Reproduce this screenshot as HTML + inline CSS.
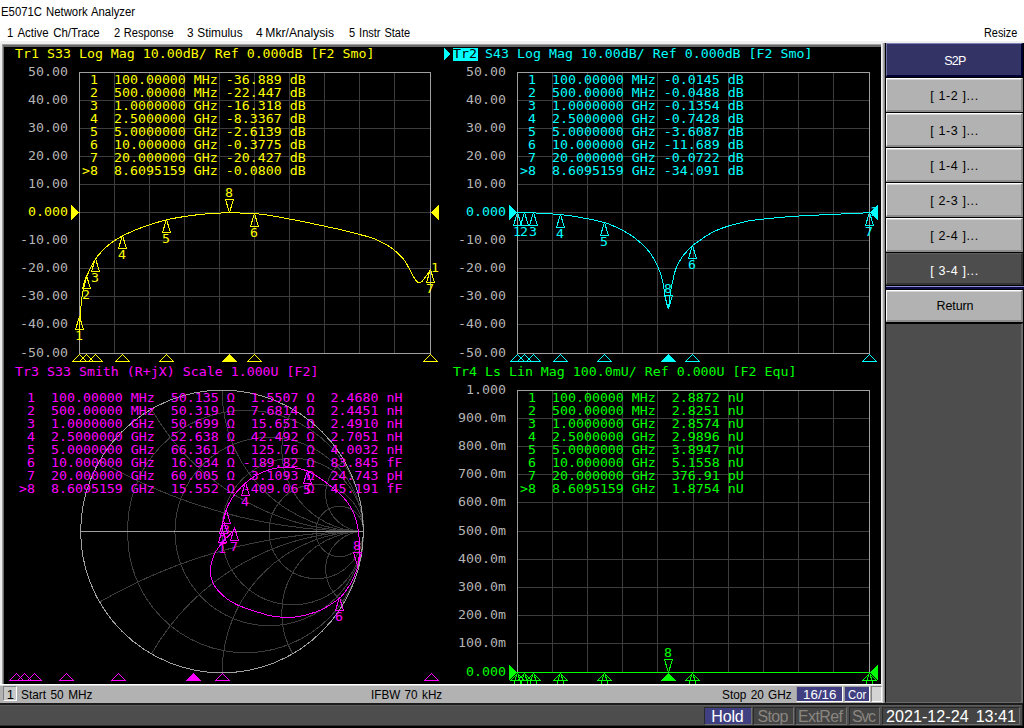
<!DOCTYPE html>
<html><head><meta charset="utf-8"><title>E5071C Network Analyzer</title>
<style>
html,body{margin:0;padding:0}
body{width:1024px;height:728px;overflow:hidden;background:#fff;position:relative;font-family:"Liberation Sans",sans-serif;color:#000}
.t{position:absolute;white-space:pre;line-height:1}
.abs{position:absolute}
.sk{position:absolute;left:886px;width:137px;height:34px;background:#b2b2b2;box-sizing:border-box;border-style:solid;border-width:1px 2px 2px 1px;border-color:#fff #8c8c8c #8c8c8c #fff;box-shadow:inset 0 1px 0 #d4d4d4}
svg text{font-family:"DejaVu Sans Mono","Liberation Mono",monospace;font-size:11.7px;white-space:pre}
</style></head><body>

<div class="t" style="left:1.3px;top:5.84px;font-size:12px;word-spacing:0.886px;color:#000;transform:scaleX(0.9454);transform-origin:0 0">E5071C Network Analyzer</div>
<div class="t" style="left:7.1px;top:27.24px;font-size:12px;word-spacing:1.571px;color:#000;transform:scaleX(0.9519);transform-origin:0 0">1 Active Ch/Trace</div>
<div class="t" style="left:113.5px;top:27.24px;font-size:12px;word-spacing:0.494px;color:#000;transform:scaleX(0.9255);transform-origin:0 0">2 Response</div>
<div class="t" style="left:187.0px;top:27.24px;font-size:12px;word-spacing:0.404px;color:#000;transform:scaleX(0.9850);transform-origin:0 0">3 Stimulus</div>
<div class="t" style="left:256.1px;top:27.24px;font-size:12px;word-spacing:-0.855px;color:#000;transform:scaleX(1.0126);transform-origin:0 0">4 Mkr/Analysis</div>
<div class="t" style="left:348.7px;top:27.24px;font-size:12px;word-spacing:0.965px;color:#000;transform:scaleX(0.9182);transform-origin:0 0">5 Instr State</div>
<div class="t" style="left:984.4px;top:27.24px;font-size:12px;word-spacing:0.000px;color:#000;transform:scaleX(0.9057);transform-origin:0 0">Resize</div>
<div class="abs" style="left:0;top:41px;width:1024px;height:3px;background:#f0f0f0"></div>
<div class="abs" style="left:0;top:44px;width:886px;height:660px;background:#ececec"></div>
<div class="abs" style="left:2px;top:44px;width:882px;height:642px;background:#a0a0a0"></div>
<div class="abs" style="left:3px;top:45px;width:880px;height:640px;background:#696969"></div>
<div class="abs" style="left:4px;top:47px;width:877px;height:637px;background:#000"></div>
<div class="abs" style="left:881px;top:44px;width:3px;height:642px;background:#fff"></div>
<div class="abs" style="left:0;top:684px;width:885px;height:19px;background:#b2b2b2;border-top:1px solid #fff;box-sizing:border-box;box-shadow:inset 0 1px 0 #d8d8d8"></div>
<div class="abs" style="left:0;top:703px;width:1024px;height:25px;background:#4d4d4d;border-top:2px solid #1c1c1c;box-sizing:border-box"></div>
<div class="abs" style="left:3px;top:686px;width:14px;height:15px;background:#c8c8c8;box-sizing:border-box;border:1px solid #808080;border-right-color:#fff;border-bottom-color:#fff"></div>
<div class="t" style="left:6.8px;top:687.50px;font-size:13px;color:#000;">1</div>
<div class="t" style="left:21.0px;top:687.50px;font-size:13px;word-spacing:1.429px;color:#000;transform:scaleX(0.9087);transform-origin:0 0">Start 50 MHz</div>
<div class="t" style="left:371.3px;top:687.50px;font-size:13px;word-spacing:1.324px;color:#000;transform:scaleX(0.8983);transform-origin:0 0">IFBW 70 kHz</div>
<div class="t" style="left:722.0px;top:687.50px;font-size:13px;word-spacing:1.167px;color:#000;transform:scaleX(0.9083);transform-origin:0 0">Stop 20 GHz</div>
<div class="abs" style="left:796px;top:686px;width:47px;height:16px;background:#3f3f82;box-sizing:border-box;border:1px solid #a0a0a0;border-right-color:#fff;border-bottom-color:#fff"></div>
<div class="t" style="left:802.8px;top:687.50px;font-size:13px;word-spacing:0.000px;color:#fff;transform:scaleX(1.0289);transform-origin:0 0">16/16</div>
<div class="abs" style="left:844px;top:686px;width:26px;height:16px;background:#3f3f82;box-sizing:border-box;border:1px solid #a0a0a0;border-right-color:#fff;border-bottom-color:#fff"></div>
<div class="t" style="left:848.0px;top:687.50px;font-size:13px;word-spacing:0.000px;color:#fff;transform:scaleX(0.8685);transform-origin:0 0">Cor</div>
<div class="abs" style="left:871px;top:686px;width:11px;height:16px;background:#d4d4d4;box-sizing:border-box;border:1px solid #808080;border-right-color:#fff;border-bottom-color:#fff"></div>
<div class="abs" style="left:704px;top:707px;width:48px;height:18px;background:#3f3f82;box-sizing:border-box;border:1px solid #2a2a2a;border-right-color:#707070;border-bottom-color:#707070"></div>
<div class="t" style="left:711.3px;top:708.96px;font-size:16px;letter-spacing:-0.168px;color:#fff;">Hold</div>
<div class="abs" style="left:753px;top:707px;width:41px;height:18px;background:#444;box-sizing:border-box;border:1px solid #2a2a2a;border-right-color:#707070;border-bottom-color:#707070"></div>
<div class="t" style="left:757.5px;top:708.96px;font-size:16px;letter-spacing:-0.638px;color:#8a8680;">Stop</div>
<div class="abs" style="left:795px;top:707px;width:52px;height:18px;background:#444;box-sizing:border-box;border:1px solid #2a2a2a;border-right-color:#707070;border-bottom-color:#707070"></div>
<div class="t" style="left:798.0px;top:708.96px;font-size:16px;letter-spacing:-0.603px;color:#8a8680;">ExtRef</div>
<div class="abs" style="left:849px;top:707px;width:31px;height:18px;background:#444;box-sizing:border-box;border:1px solid #2a2a2a;border-right-color:#707070;border-bottom-color:#707070"></div>
<div class="t" style="left:852.0px;top:708.96px;font-size:16px;letter-spacing:-1.336px;color:#8a8680;">Svc</div>
<div class="abs" style="left:882px;top:707px;width:138px;height:18px;background:#444;box-sizing:border-box;border:1px solid #2a2a2a;border-right-color:#707070;border-bottom-color:#707070"></div>
<div class="t" style="left:885.7px;top:708.96px;font-size:16px;word-spacing:2.463px;color:#fff;transform:scaleX(1.0099);transform-origin:0 0">2021-12-24 13:41</div>
<div class="abs" style="left:0;top:725px;width:1024px;height:1px;background:#303030"></div>
<div class="abs" style="left:0;top:726px;width:1024px;height:2px;background:#000"></div>
<div class="abs" style="left:0;top:705px;width:1024px;height:1px;background:#5c5c5c"></div>
<div class="abs" style="left:885px;top:43px;width:139px;height:281px;background:#000"></div>
<div class="abs" style="left:885px;top:323px;width:138px;height:380px;background:#4d4d4d;border-style:solid;border-width:1px 2px 1px 1px;border-color:#000 #6a6a6a #6a6a6a #000;box-sizing:border-box"></div>
<div class="abs" style="left:1023px;top:43px;width:1px;height:685px;background:#000"></div>
<div class="abs" style="left:1022px;top:705px;width:1px;height:21px;background:#222"></div>
<div class="abs" style="left:881px;top:43px;width:1px;height:643px;background:#f0f0f0"></div>
<div class="abs" style="left:882px;top:43px;width:1px;height:660px;background:#d8d8d8"></div>
<div class="abs" style="left:883px;top:43px;width:1px;height:660px;background:#a8a8a8"></div>
<div class="abs" style="left:884px;top:43px;width:1px;height:660px;background:#888"></div>
<div class="sk" style="top:43px;background:#333366;border-color:#8080b8 #000033 #000033 #7070a8;box-shadow:none"></div>
<div class="t" style="left:944.3px;top:54.72px;font-size:12.5px;letter-spacing:-0.813px;color:#fff;">S2P</div>
<div class="sk" style="top:78px"></div>
<div class="t" style="left:930.2px;top:89.82px;font-size:12.5px;letter-spacing:0.625px;color:#000;">[ 1-2 ]...</div>
<div class="sk" style="top:113px"></div>
<div class="t" style="left:930.2px;top:124.82px;font-size:12.5px;letter-spacing:0.625px;color:#000;">[ 1-3 ]...</div>
<div class="sk" style="top:148px"></div>
<div class="t" style="left:930.2px;top:159.82px;font-size:12.5px;letter-spacing:0.625px;color:#000;">[ 1-4 ]...</div>
<div class="sk" style="top:183px"></div>
<div class="t" style="left:930.2px;top:194.82px;font-size:12.5px;letter-spacing:0.625px;color:#000;">[ 2-3 ]...</div>
<div class="sk" style="top:218px"></div>
<div class="t" style="left:930.2px;top:229.82px;font-size:12.5px;letter-spacing:0.625px;color:#000;">[ 2-4 ]...</div>
<div class="sk" style="top:253px;height:32px;background:#4d4d4d;border-color:#606060 #333 #333 #808080;box-shadow:none"></div>
<div class="t" style="left:930.2px;top:265.02px;font-size:12.5px;letter-spacing:0.625px;color:#fff;">[ 3-4 ]...</div>
<div class="abs" style="left:886px;top:286px;width:138px;height:1px;background:#9090d0"></div>
<div class="abs" style="left:886px;top:287px;width:138px;height:2px;background:#0c0c48"></div>
<div class="sk" style="top:290px;height:32px"></div>
<div class="t" style="left:936.5px;top:300.02px;font-size:12.5px;letter-spacing:-0.103px;color:#000;">Return</div>
<svg class="abs" style="left:0;top:0" width="1024" height="728" viewBox="0 0 1024 728" shape-rendering="crispEdges">
<defs><clipPath id="disp"><rect x="4" y="47" width="877" height="637"/></clipPath></defs>
<g clip-path="url(#disp)" stroke-width="1" stroke-linejoin="bevel">
<path d="M114.5 72V354M79 100.5H431M149.5 72V354M79 128.5H431M184.5 72V354M79 156.5H431M219.5 72V354M79 184.5H431M254.5 72V354M79 212.5H431M289.5 72V354M79 240.5H431M324.5 72V354M79 268.5H431M359.5 72V354M79 296.5H431M394.5 72V354M79 324.5H431" stroke="#3c3c3c" fill="none"/>
<rect x="79.5" y="72.5" width="351" height="281" stroke="#a0a0a0" fill="none"/>
<text transform="translate(28,76) scale(1.1357,1)" fill="#b4b4b4">50.00</text>
<text transform="translate(28,104) scale(1.1357,1)" fill="#b4b4b4">40.00</text>
<text transform="translate(28,132) scale(1.1357,1)" fill="#b4b4b4">30.00</text>
<text transform="translate(28,160) scale(1.1357,1)" fill="#b4b4b4">20.00</text>
<text transform="translate(28,188) scale(1.1357,1)" fill="#b4b4b4">10.00</text>
<text transform="translate(28,216) scale(1.1357,1)" fill="#ffff00">0.000</text>
<text transform="translate(20,244) scale(1.1357,1)" fill="#b4b4b4">-10.00</text>
<text transform="translate(20,272) scale(1.1357,1)" fill="#b4b4b4">-20.00</text>
<text transform="translate(20,300) scale(1.1357,1)" fill="#b4b4b4">-30.00</text>
<text transform="translate(20,328) scale(1.1357,1)" fill="#b4b4b4">-40.00</text>
<text transform="translate(20,357) scale(1.1357,1)" fill="#b4b4b4">-50.00</text>
<path d="M79.5 212.5L71 204.5V220.5Z" fill="#ffff00"/>
<path d="M430.5 212.5L439 204.5V220.5Z" fill="#ffff00"/>
<text transform="translate(15,58) scale(1.1357,1)" fill="#ffff00">Tr1 S33 Log Mag 10.00dB/ Ref 0.000dB [F2 Smo]</text>
<text transform="translate(82,84) scale(1.1357,1)" fill="#ffff00"> 1  100.00000 MHz -36.889 dB</text>
<text transform="translate(82,97) scale(1.1357,1)" fill="#ffff00"> 2  500.00000 MHz -22.447 dB</text>
<text transform="translate(82,110) scale(1.1357,1)" fill="#ffff00"> 3  1.0000000 GHz -16.318 dB</text>
<text transform="translate(82,123) scale(1.1357,1)" fill="#ffff00"> 4  2.5000000 GHz -8.3367 dB</text>
<text transform="translate(82,136) scale(1.1357,1)" fill="#ffff00"> 5  5.0000000 GHz -2.6139 dB</text>
<text transform="translate(82,149) scale(1.1357,1)" fill="#ffff00"> 6  10.000000 GHz -0.3775 dB</text>
<text transform="translate(82,162) scale(1.1357,1)" fill="#ffff00"> 7  20.000000 GHz -20.427 dB</text>
<text transform="translate(82,175) scale(1.1357,1)" fill="#ffff00">&gt;8  8.6095159 GHz -0.0800 dB</text>
<polyline points="79.3,333.0 79.8,322.6 80.3,314.6 80.8,308.4 81.3,303.3 81.8,299.0 82.3,295.5 82.8,292.5 83.3,290.0 83.8,287.7 84.3,285.6 84.8,283.6 85.3,281.7 85.8,280.0 86.3,278.4 86.8,276.8 87.3,275.4 87.8,274.1 88.3,272.8 88.8,271.6 89.3,270.4 89.8,269.3 90.3,268.3 90.8,267.3 91.3,266.3 91.8,265.3 92.3,264.4 92.8,263.5 93.3,262.6 93.8,261.8 94.3,261.0 94.8,260.2 95.3,259.4 95.8,258.7 96.3,258.0 96.8,257.4 97.2,256.7 97.7,256.1 98.2,255.4 98.7,254.8 99.2,254.2 99.7,253.6 100.2,253.1 100.7,252.5 101.2,251.9 101.7,251.4 102.2,250.9 102.7,250.4 103.2,249.9 103.7,249.4 104.2,248.9 104.7,248.4 105.2,247.9 105.7,247.5 106.2,247.0 106.7,246.6 107.2,246.2 107.7,245.8 108.2,245.3 108.7,244.9 109.2,244.5 109.7,244.1 110.2,243.8 110.7,243.4 111.2,243.0 111.7,242.7 112.2,242.3 112.7,241.9 113.2,241.6 113.7,241.2 114.2,240.9 114.7,240.6 115.2,240.2 115.7,239.9 116.2,239.6 116.7,239.3 117.2,238.9 117.7,238.6 118.2,238.3 118.7,238.0 119.2,237.7 119.7,237.4 120.2,237.2 120.7,236.9 121.2,236.6 121.7,236.3 122.2,236.0 122.7,235.8 123.2,235.5 123.7,235.3 124.2,235.0 124.7,234.8 125.2,234.5 125.7,234.3 126.2,234.0 126.7,233.8 127.2,233.6 127.7,233.3 128.2,233.1 128.7,232.9 129.2,232.6 129.7,232.4 130.2,232.2 130.7,232.0 131.2,231.8 131.7,231.6 132.1,231.3 132.6,231.1 133.1,230.9 133.6,230.7 134.1,230.5 134.6,230.3 135.1,230.1 135.6,229.9 136.1,229.7 136.6,229.5 137.1,229.3 137.6,229.1 138.1,228.9 138.6,228.8 139.1,228.6 139.6,228.4 140.1,228.2 140.6,228.0 141.1,227.8 141.6,227.6 142.1,227.5 142.6,227.3 143.1,227.1 143.6,226.9 144.1,226.7 144.6,226.6 145.1,226.4 145.6,226.2 146.1,226.0 146.6,225.9 147.1,225.7 147.6,225.5 148.1,225.4 148.6,225.2 149.1,225.0 149.6,224.9 150.1,224.7 150.6,224.6 151.1,224.4 151.6,224.2 152.1,224.1 152.6,223.9 153.1,223.7 153.6,223.6 154.1,223.4 154.6,223.2 155.1,223.1 155.6,222.9 156.1,222.8 156.6,222.6 157.1,222.4 157.6,222.3 158.1,222.1 158.6,222.0 159.1,221.8 159.6,221.7 160.1,221.5 160.6,221.4 161.1,221.2 161.6,221.1 162.1,221.0 162.6,220.8 163.1,220.7 163.6,220.5 164.1,220.4 164.6,220.3 165.1,220.2 165.6,220.0 166.1,219.9 166.6,219.8 167.1,219.7 167.5,219.6 168.0,219.5 168.5,219.4 169.0,219.3 169.5,219.1 170.0,219.0 170.5,218.9 171.0,218.8 171.5,218.7 172.0,218.6 172.5,218.5 173.0,218.4 173.5,218.3 174.0,218.3 174.5,218.2 175.0,218.1 175.5,218.0 176.0,217.9 176.5,217.8 177.0,217.7 177.5,217.6 178.0,217.5 178.5,217.4 179.0,217.4 179.5,217.3 180.0,217.2 180.5,217.1 181.0,217.0 181.5,217.0 182.0,216.9 182.5,216.8 183.0,216.7 183.5,216.6 184.0,216.6 184.5,216.5 185.0,216.4 185.5,216.3 186.0,216.3 186.5,216.2 187.0,216.1 187.5,216.1 188.0,216.0 188.5,215.9 189.0,215.8 189.5,215.8 190.0,215.7 190.5,215.6 191.0,215.6 191.5,215.5 192.0,215.4 192.5,215.4 193.0,215.3 193.5,215.2 194.0,215.2 194.5,215.1 195.0,215.0 195.5,215.0 196.0,214.9 196.5,214.9 197.0,214.8 197.5,214.7 198.0,214.7 198.5,214.6 199.0,214.6 199.5,214.5 200.0,214.5 200.5,214.4 201.0,214.4 201.5,214.3 202.0,214.3 202.4,214.2 202.9,214.2 203.4,214.2 203.9,214.1 204.4,214.1 204.9,214.0 205.4,214.0 205.9,213.9 206.4,213.9 206.9,213.9 207.4,213.8 207.9,213.8 208.4,213.7 208.9,213.7 209.4,213.7 209.9,213.6 210.4,213.6 210.9,213.5 211.4,213.5 211.9,213.5 212.4,213.4 212.9,213.4 213.4,213.4 213.9,213.3 214.4,213.3 214.9,213.3 215.4,213.3 215.9,213.2 216.4,213.2 216.9,213.2 217.4,213.1 217.9,213.1 218.4,213.1 218.9,213.1 219.4,213.1 219.9,213.0 220.4,213.0 220.9,213.0 221.4,213.0 221.9,212.9 222.4,212.9 222.9,212.9 223.4,212.9 223.9,212.9 224.4,212.8 224.9,212.8 225.4,212.8 225.9,212.8 226.4,212.8 226.9,212.8 227.4,212.8 227.9,212.7 228.4,212.7 228.9,212.7 229.4,212.7 229.9,212.7 230.4,212.7 230.9,212.7 231.4,212.7 231.9,212.7 232.4,212.7 232.9,212.8 233.4,212.8 233.9,212.8 234.4,212.8 234.9,212.8 235.4,212.8 235.9,212.8 236.4,212.8 236.9,212.8 237.3,212.9 237.8,212.9 238.3,212.9 238.8,212.9 239.3,212.9 239.8,212.9 240.3,213.0 240.8,213.0 241.3,213.0 241.8,213.0 242.3,213.0 242.8,213.0 243.3,213.0 243.8,213.1 244.3,213.1 244.8,213.1 245.3,213.1 245.8,213.1 246.3,213.2 246.8,213.2 247.3,213.2 247.8,213.2 248.3,213.2 248.8,213.3 249.3,213.3 249.8,213.3 250.3,213.3 250.8,213.4 251.3,213.4 251.8,213.4 252.3,213.4 252.8,213.5 253.3,213.5 253.8,213.5 254.3,213.6 254.8,213.6 255.3,213.6 255.8,213.7 256.3,213.7 256.8,213.7 257.3,213.8 257.8,213.8 258.3,213.9 258.8,213.9 259.3,214.0 259.8,214.0 260.3,214.1 260.8,214.1 261.3,214.2 261.8,214.3 262.3,214.3 262.8,214.4 263.3,214.5 263.8,214.5 264.3,214.6 264.8,214.7 265.3,214.7 265.8,214.8 266.3,214.9 266.8,215.0 267.3,215.0 267.8,215.1 268.3,215.2 268.8,215.3 269.3,215.3 269.8,215.4 270.3,215.5 270.8,215.6 271.3,215.7 271.8,215.8 272.3,215.9 272.7,215.9 273.2,216.0 273.7,216.1 274.2,216.2 274.7,216.3 275.2,216.4 275.7,216.5 276.2,216.6 276.7,216.7 277.2,216.7 277.7,216.8 278.2,216.9 278.7,217.0 279.2,217.1 279.7,217.2 280.2,217.3 280.7,217.4 281.2,217.5 281.7,217.6 282.2,217.7 282.7,217.8 283.2,217.9 283.7,218.0 284.2,218.1 284.7,218.1 285.2,218.2 285.7,218.3 286.2,218.4 286.7,218.5 287.2,218.6 287.7,218.7 288.2,218.8 288.7,218.9 289.2,219.0 289.7,219.1 290.2,219.1 290.7,219.2 291.2,219.3 291.7,219.4 292.2,219.5 292.7,219.6 293.2,219.7 293.7,219.8 294.2,219.9 294.7,220.0 295.2,220.1 295.7,220.2 296.2,220.3 296.7,220.4 297.2,220.5 297.7,220.6 298.2,220.7 298.7,220.7 299.2,220.8 299.7,220.9 300.2,221.0 300.7,221.1 301.2,221.3 301.7,221.4 302.2,221.5 302.7,221.6 303.2,221.7 303.7,221.8 304.2,221.9 304.7,222.0 305.2,222.1 305.7,222.2 306.2,222.3 306.7,222.4 307.2,222.5 307.6,222.6 308.1,222.7 308.6,222.8 309.1,222.9 309.6,223.0 310.1,223.1 310.6,223.2 311.1,223.3 311.6,223.4 312.1,223.6 312.6,223.7 313.1,223.8 313.6,223.9 314.1,224.0 314.6,224.1 315.1,224.2 315.6,224.3 316.1,224.4 316.6,224.5 317.1,224.6 317.6,224.7 318.1,224.8 318.6,224.9 319.1,225.1 319.6,225.2 320.1,225.3 320.6,225.4 321.1,225.5 321.6,225.6 322.1,225.7 322.6,225.8 323.1,225.9 323.6,226.0 324.1,226.1 324.6,226.2 325.1,226.3 325.6,226.4 326.1,226.5 326.6,226.6 327.1,226.7 327.6,226.9 328.1,227.0 328.6,227.1 329.1,227.2 329.6,227.3 330.1,227.4 330.6,227.5 331.1,227.6 331.6,227.7 332.1,227.8 332.6,227.9 333.1,228.0 333.6,228.1 334.1,228.2 334.6,228.3 335.1,228.4 335.6,228.5 336.1,228.7 336.6,228.8 337.1,228.9 337.6,229.0 338.1,229.1 338.6,229.2 339.1,229.3 339.6,229.4 340.1,229.6 340.6,229.7 341.1,229.8 341.6,229.9 342.1,230.0 342.6,230.1 343.0,230.3 343.5,230.4 344.0,230.5 344.5,230.6 345.0,230.7 345.5,230.9 346.0,231.0 346.5,231.1 347.0,231.2 347.5,231.4 348.0,231.5 348.5,231.6 349.0,231.7 349.5,231.8 350.0,232.0 350.5,232.1 351.0,232.2 351.5,232.4 352.0,232.5 352.5,232.6 353.0,232.7 353.5,232.9 354.0,233.0 354.5,233.1 355.0,233.3 355.5,233.4 356.0,233.5 356.5,233.6 357.0,233.8 357.5,233.9 358.0,234.0 358.5,234.2 359.0,234.3 359.5,234.4 360.0,234.6 360.5,234.7 361.0,234.8 361.5,235.0 362.0,235.1 362.5,235.2 363.0,235.3 363.5,235.5 364.0,235.6 364.5,235.7 365.0,235.9 365.5,236.0 366.0,236.1 366.5,236.3 367.0,236.4 367.5,236.6 368.0,236.7 368.5,236.9 369.0,237.0 369.5,237.2 370.0,237.3 370.5,237.5 371.0,237.7 371.5,237.8 372.0,238.0 372.5,238.2 373.0,238.4 373.5,238.6 374.0,238.7 374.5,238.9 375.0,239.1 375.5,239.4 376.0,239.6 376.5,239.8 377.0,240.0 377.5,240.2 377.9,240.5 378.4,240.7 378.9,240.9 379.4,241.2 379.9,241.4 380.4,241.6 380.9,241.9 381.4,242.1 381.9,242.4 382.4,242.6 382.9,242.9 383.4,243.1 383.9,243.4 384.4,243.7 384.9,243.9 385.4,244.2 385.9,244.5 386.4,244.8 386.9,245.1 387.4,245.4 387.9,245.7 388.4,246.0 388.9,246.3 389.4,246.6 389.9,246.9 390.4,247.3 390.9,247.6 391.4,248.0 391.9,248.3 392.4,248.7 392.9,249.1 393.4,249.5 393.9,249.8 394.4,250.3 394.9,250.7 395.4,251.1 395.9,251.5 396.4,252.0 396.9,252.4 397.4,252.9 397.9,253.3 398.4,253.8 398.9,254.3 399.4,254.8 399.9,255.3 400.4,255.8 400.9,256.3 401.4,256.8 401.9,257.4 402.4,257.9 402.9,258.5 403.4,259.1 403.9,259.7 404.4,260.4 404.9,261.1 405.4,261.8 405.9,262.7 406.4,263.5 406.9,264.4 407.4,265.3 407.9,266.2 408.4,267.1 408.9,267.9 409.4,268.9 409.9,269.8 410.4,270.8 410.9,271.7 411.4,272.6 411.9,273.6 412.4,274.5 412.8,275.3 413.3,276.2 413.8,277.1 414.3,278.0 414.8,278.8 415.3,279.6 415.8,280.2 416.3,280.8 416.8,281.3 417.3,281.8 417.8,282.2 418.3,282.5 418.8,282.6 419.3,282.6 419.8,282.4 420.3,282.3 420.8,282.0 421.3,281.8 421.8,281.5 422.3,281.1 422.8,280.5 423.3,279.9 423.8,279.2 424.3,278.5 424.8,277.8 425.3,277.2 425.8,276.5 426.3,275.8 426.8,275.1 427.3,274.4 427.8,273.7 428.3,272.9 428.8,272.2 429.3,271.4 429.8,270.7 430.3,269.9" stroke="#ffff00" fill="none"/>
<path d="M79.5 316.5L75.5 329.5H83.5Z" stroke="#ffff00" fill="none"/>
<text transform="translate(75.0,339.5) scale(1.1357,1)" fill="#ffff00">1</text>
<path d="M79.5 354.5L72.5 361.5H86.5Z" stroke="#ffff00" fill="none"/>
<path d="M86.5 275.5L82.5 288.5H90.5Z" stroke="#ffff00" fill="none"/>
<text transform="translate(82.0,298.5) scale(1.1357,1)" fill="#ffff00">2</text>
<path d="M86.5 354.5L79.5 361.5H93.5Z" stroke="#ffff00" fill="none"/>
<path d="M95.5 258.5L91.5 271.5H99.5Z" stroke="#ffff00" fill="none"/>
<text transform="translate(91.0,281.5) scale(1.1357,1)" fill="#ffff00">3</text>
<path d="M95.5 354.5L88.5 361.5H102.5Z" stroke="#ffff00" fill="none"/>
<path d="M122.5 235.5L118.5 248.5H126.5Z" stroke="#ffff00" fill="none"/>
<text transform="translate(118.0,258.5) scale(1.1357,1)" fill="#ffff00">4</text>
<path d="M122.5 354.5L115.5 361.5H129.5Z" stroke="#ffff00" fill="none"/>
<path d="M166.5 219.5L162.5 232.5H170.5Z" stroke="#ffff00" fill="none"/>
<text transform="translate(162.0,242.5) scale(1.1357,1)" fill="#ffff00">5</text>
<path d="M166.5 354.5L159.5 361.5H173.5Z" stroke="#ffff00" fill="none"/>
<path d="M254.5 213.5L250.5 226.5H258.5Z" stroke="#ffff00" fill="none"/>
<text transform="translate(250.0,236.5) scale(1.1357,1)" fill="#ffff00">6</text>
<path d="M254.5 354.5L247.5 361.5H261.5Z" stroke="#ffff00" fill="none"/>
<path d="M430.5 269.5L426.5 282.5H434.5Z" stroke="#ffff00" fill="none"/>
<text transform="translate(426.0,292.5) scale(1.1357,1)" fill="#ffff00">7</text>
<path d="M430.5 354.5L423.5 361.5H437.5Z" stroke="#ffff00" fill="none"/>
<path d="M229.5 212.5L225.5 199.5H233.5Z" stroke="#ffff00" fill="none"/>
<text transform="translate(225.0,196.5) scale(1.1357,1)" fill="#ffff00">8</text>
<path d="M229.5 354.5L222.5 361.5H236.5Z" stroke="#ffff00" fill="#ffff00"/>
<text transform="translate(431,272) scale(1.1357,1)" fill="#ffff00">1</text>
<path d="M552.5 72V354M517 100.5H870M587.5 72V354M517 128.5H870M622.5 72V354M517 156.5H870M657.5 72V354M517 184.5H870M693.5 72V354M517 212.5H870M728.5 72V354M517 240.5H870M763.5 72V354M517 268.5H870M798.5 72V354M517 296.5H870M833.5 72V354M517 324.5H870" stroke="#3c3c3c" fill="none"/>
<rect x="517.5" y="72.5" width="352" height="281" stroke="#a0a0a0" fill="none"/>
<text transform="translate(466,76) scale(1.1357,1)" fill="#b4b4b4">50.00</text>
<text transform="translate(466,104) scale(1.1357,1)" fill="#b4b4b4">40.00</text>
<text transform="translate(466,132) scale(1.1357,1)" fill="#b4b4b4">30.00</text>
<text transform="translate(466,160) scale(1.1357,1)" fill="#b4b4b4">20.00</text>
<text transform="translate(466,188) scale(1.1357,1)" fill="#b4b4b4">10.00</text>
<text transform="translate(466,216) scale(1.1357,1)" fill="#00ffff">0.000</text>
<text transform="translate(458,244) scale(1.1357,1)" fill="#b4b4b4">-10.00</text>
<text transform="translate(458,272) scale(1.1357,1)" fill="#b4b4b4">-20.00</text>
<text transform="translate(458,300) scale(1.1357,1)" fill="#b4b4b4">-30.00</text>
<text transform="translate(458,328) scale(1.1357,1)" fill="#b4b4b4">-40.00</text>
<text transform="translate(458,357) scale(1.1357,1)" fill="#b4b4b4">-50.00</text>
<path d="M517.5 212.5L509 204.5V220.5Z" fill="#00ffff"/>
<path d="M869.5 212.5L878 204.5V220.5Z" fill="#00ffff"/>
<path d="M444 48L450.5 54L444 60Z" fill="#00ffff"/>
<rect x="453" y="48" width="25" height="13" fill="#00ffff"/>
<text transform="translate(453,58) scale(1.1357,1)" fill="#000">Tr2</text>
<text transform="translate(485,58) scale(1.1357,1)" fill="#00ffff">S43 Log Mag 10.00dB/ Ref 0.000dB [F2 Smo]</text>
<text transform="translate(520,84) scale(1.1357,1)" fill="#00ffff"> 1  100.00000 MHz -0.0145 dB</text>
<text transform="translate(520,97) scale(1.1357,1)" fill="#00ffff"> 2  500.00000 MHz -0.0488 dB</text>
<text transform="translate(520,110) scale(1.1357,1)" fill="#00ffff"> 3  1.0000000 GHz -0.1354 dB</text>
<text transform="translate(520,123) scale(1.1357,1)" fill="#00ffff"> 4  2.5000000 GHz -0.7428 dB</text>
<text transform="translate(520,136) scale(1.1357,1)" fill="#00ffff"> 5  5.0000000 GHz -3.6087 dB</text>
<text transform="translate(520,149) scale(1.1357,1)" fill="#00ffff"> 6  10.000000 GHz -11.689 dB</text>
<text transform="translate(520,162) scale(1.1357,1)" fill="#00ffff"> 7  20.000000 GHz -0.0722 dB</text>
<text transform="translate(520,175) scale(1.1357,1)" fill="#00ffff">&gt;8  8.6095159 GHz -34.091 dB</text>
<polyline points="517.3,212.5 517.8,212.5 518.3,212.5 518.8,212.5 519.3,212.6 519.8,212.6 520.3,212.6 520.8,212.6 521.3,212.6 521.8,212.6 522.3,212.6 522.8,212.6 523.3,212.6 523.8,212.6 524.3,212.6 524.8,212.6 525.3,212.6 525.8,212.6 526.3,212.7 526.8,212.7 527.3,212.7 527.8,212.7 528.3,212.7 528.8,212.7 529.3,212.7 529.8,212.7 530.3,212.8 530.8,212.8 531.3,212.8 531.8,212.8 532.3,212.8 532.8,212.8 533.3,212.9 533.8,212.9 534.3,212.9 534.8,212.9 535.3,212.9 535.8,212.9 536.3,213.0 536.8,213.0 537.3,213.0 537.8,213.0 538.3,213.1 538.8,213.1 539.3,213.1 539.8,213.1 540.3,213.1 540.8,213.2 541.3,213.2 541.8,213.2 542.3,213.3 542.8,213.3 543.3,213.3 543.8,213.3 544.3,213.4 544.8,213.4 545.3,213.4 545.8,213.4 546.3,213.5 546.8,213.5 547.3,213.5 547.8,213.6 548.3,213.6 548.8,213.6 549.3,213.7 549.8,213.7 550.3,213.7 550.8,213.8 551.3,213.8 551.8,213.8 552.3,213.9 552.8,213.9 553.3,214.0 553.8,214.0 554.3,214.0 554.8,214.1 555.3,214.1 555.8,214.2 556.3,214.2 556.8,214.2 557.3,214.3 557.8,214.3 558.3,214.4 558.8,214.4 559.3,214.5 559.8,214.5 560.3,214.6 560.8,214.6 561.3,214.7 561.8,214.7 562.3,214.8 562.8,214.8 563.3,214.9 563.8,214.9 564.3,215.0 564.8,215.1 565.3,215.1 565.8,215.2 566.3,215.2 566.8,215.3 567.3,215.4 567.8,215.4 568.3,215.5 568.8,215.6 569.3,215.6 569.8,215.7 570.3,215.8 570.8,215.9 571.3,215.9 571.8,216.0 572.3,216.1 572.8,216.1 573.3,216.2 573.8,216.3 574.3,216.4 574.8,216.4 575.3,216.5 575.8,216.6 576.3,216.7 576.8,216.8 577.3,216.9 577.8,216.9 578.3,217.0 578.8,217.1 579.3,217.2 579.8,217.3 580.3,217.4 580.8,217.5 581.3,217.6 581.8,217.7 582.3,217.8 582.8,217.9 583.3,218.0 583.8,218.1 584.3,218.2 584.8,218.2 585.3,218.3 585.8,218.4 586.3,218.5 586.8,218.6 587.3,218.7 587.8,218.8 588.3,218.9 588.8,219.0 589.3,219.1 589.8,219.2 590.3,219.3 590.8,219.4 591.3,219.5 591.8,219.6 592.3,219.7 592.8,219.8 593.3,219.9 593.8,220.0 594.3,220.1 594.8,220.2 595.3,220.3 595.8,220.4 596.3,220.6 596.8,220.7 597.3,220.8 597.8,220.9 598.3,221.0 598.8,221.1 599.3,221.2 599.8,221.4 600.3,221.5 600.8,221.6 601.3,221.7 601.8,221.9 602.3,222.0 602.8,222.1 603.3,222.3 603.8,222.4 604.3,222.5 604.8,222.7 605.3,222.8 605.8,223.0 606.3,223.2 606.8,223.3 607.3,223.5 607.8,223.7 608.3,223.9 608.8,224.0 609.3,224.2 609.8,224.4 610.3,224.6 610.8,224.8 611.3,225.0 611.8,225.3 612.3,225.5 612.8,225.7 613.3,225.9 613.8,226.1 614.3,226.4 614.8,226.6 615.3,226.8 615.8,227.1 616.3,227.3 616.8,227.5 617.3,227.8 617.8,228.0 618.3,228.3 618.8,228.5 619.3,228.8 619.8,229.0 620.3,229.2 620.8,229.5 621.3,229.8 621.8,230.0 622.3,230.3 622.8,230.5 623.3,230.8 623.8,231.1 624.3,231.3 624.8,231.6 625.3,231.9 625.8,232.2 626.3,232.5 626.8,232.8 627.3,233.1 627.8,233.4 628.3,233.7 628.8,234.0 629.3,234.3 629.8,234.6 630.3,234.9 630.8,235.3 631.3,235.6 631.8,235.9 632.3,236.3 632.8,236.6 633.3,236.9 633.8,237.3 634.3,237.7 634.8,238.0 635.3,238.4 635.8,238.8 636.3,239.2 636.8,239.6 637.3,240.0 637.8,240.4 638.3,240.8 638.8,241.3 639.3,241.7 639.8,242.1 640.3,242.6 640.8,243.0 641.3,243.5 641.8,243.9 642.3,244.4 642.8,244.9 643.3,245.3 643.8,245.8 644.3,246.3 644.8,246.8 645.3,247.3 645.8,247.8 646.3,248.4 646.8,248.9 647.3,249.5 647.8,250.1 648.3,250.7 648.8,251.3 649.3,251.9 649.8,252.6 650.3,253.2 650.8,254.0 651.3,254.7 651.8,255.5 652.3,256.3 652.8,257.1 653.3,257.9 653.8,258.8 654.3,259.7 654.8,260.6 655.3,261.6 655.8,262.5 656.3,263.5 656.8,264.5 657.3,265.6 657.8,266.7 658.3,267.8 658.8,269.1 659.3,270.4 659.8,271.7 660.3,273.2 660.8,274.7 661.3,276.3 661.8,278.1 662.3,280.0 662.8,282.2 663.3,284.9 663.8,287.8 664.3,290.8 664.8,293.5 665.3,296.0 665.8,298.8 666.3,301.6 666.8,304.1 667.3,306.2 667.8,307.7 668.3,308.3 668.8,306.2 669.3,301.2 669.8,296.3 670.3,293.1 670.8,290.3 671.3,287.7 671.8,285.3 672.3,283.0 672.8,280.7 673.3,278.4 673.8,276.2 674.3,274.1 674.8,272.2 675.3,270.5 675.8,269.0 676.3,267.7 676.8,266.5 677.3,265.4 677.8,264.3 678.3,263.4 678.8,262.4 679.3,261.5 679.8,260.7 680.3,259.9 680.8,259.1 681.3,258.3 681.8,257.6 682.3,256.9 682.8,256.2 683.3,255.6 683.8,254.9 684.3,254.3 684.8,253.7 685.3,253.1 685.8,252.6 686.3,252.0 686.8,251.4 687.3,250.9 687.8,250.3 688.3,249.8 688.8,249.2 689.3,248.7 689.8,248.2 690.3,247.7 690.8,247.2 691.3,246.7 691.8,246.3 692.3,245.8 692.8,245.4 693.3,245.0 693.8,244.6 694.3,244.2 694.8,243.9 695.3,243.5 695.8,243.2 696.3,242.8 696.8,242.5 697.3,242.2 697.8,241.8 698.3,241.5 698.8,241.1 699.3,240.8 699.8,240.4 700.3,240.1 700.8,239.7 701.3,239.4 701.8,239.0 702.3,238.6 702.8,238.3 703.3,237.9 703.8,237.6 704.3,237.3 704.8,236.9 705.3,236.6 705.8,236.3 706.3,235.9 706.8,235.6 707.3,235.3 707.8,235.0 708.3,234.7 708.8,234.4 709.3,234.1 709.8,233.8 710.3,233.5 710.8,233.3 711.3,233.0 711.8,232.7 712.3,232.4 712.8,232.2 713.3,231.9 713.8,231.7 714.3,231.4 714.8,231.2 715.3,231.0 715.8,230.7 716.3,230.5 716.8,230.3 717.3,230.1 717.8,229.9 718.3,229.7 718.8,229.5 719.3,229.3 719.8,229.1 720.3,228.9 720.8,228.7 721.3,228.5 721.8,228.3 722.3,228.1 722.8,227.9 723.3,227.8 723.8,227.6 724.3,227.4 724.8,227.2 725.3,227.1 725.8,226.9 726.3,226.7 726.8,226.6 727.3,226.4 727.8,226.3 728.3,226.1 728.8,225.9 729.3,225.8 729.8,225.6 730.3,225.5 730.8,225.4 731.3,225.2 731.8,225.1 732.3,224.9 732.8,224.8 733.3,224.7 733.8,224.5 734.3,224.4 734.8,224.3 735.3,224.2 735.8,224.1 736.3,223.9 736.8,223.8 737.3,223.7 737.8,223.6 738.3,223.5 738.8,223.3 739.3,223.2 739.8,223.1 740.3,223.0 740.8,222.8 741.3,222.7 741.8,222.6 742.3,222.5 742.8,222.3 743.3,222.2 743.8,222.1 744.3,221.9 744.8,221.8 745.3,221.7 745.8,221.5 746.3,221.4 746.8,221.3 747.3,221.2 747.8,221.1 748.3,221.0 748.8,220.9 749.3,220.8 749.8,220.7 750.3,220.6 750.8,220.5 751.3,220.4 751.8,220.4 752.3,220.3 752.8,220.2 753.3,220.2 753.8,220.1 754.3,220.0 754.8,220.0 755.3,219.9 755.8,219.8 756.3,219.8 756.8,219.7 757.3,219.7 757.8,219.6 758.3,219.5 758.8,219.5 759.3,219.4 759.8,219.4 760.3,219.3 760.8,219.3 761.3,219.2 761.8,219.2 762.3,219.1 762.8,219.1 763.3,219.0 763.8,219.0 764.3,218.9 764.8,218.9 765.3,218.8 765.8,218.8 766.3,218.7 766.8,218.6 767.3,218.6 767.8,218.5 768.3,218.5 768.8,218.4 769.3,218.4 769.8,218.3 770.3,218.3 770.8,218.2 771.3,218.2 771.8,218.2 772.3,218.1 772.8,218.1 773.3,218.0 773.8,218.0 774.3,217.9 774.8,217.9 775.3,217.8 775.8,217.8 776.3,217.7 776.8,217.7 777.3,217.6 777.8,217.6 778.3,217.5 778.8,217.5 779.3,217.5 779.8,217.4 780.3,217.4 780.8,217.3 781.3,217.3 781.8,217.2 782.3,217.2 782.8,217.1 783.3,217.1 783.8,217.1 784.3,217.0 784.8,217.0 785.3,216.9 785.8,216.9 786.3,216.9 786.8,216.8 787.3,216.8 787.8,216.7 788.3,216.7 788.8,216.7 789.3,216.6 789.8,216.6 790.3,216.5 790.8,216.5 791.3,216.5 791.8,216.4 792.3,216.4 792.8,216.4 793.3,216.3 793.8,216.3 794.3,216.3 794.8,216.2 795.3,216.2 795.8,216.2 796.3,216.1 796.8,216.1 797.3,216.1 797.8,216.0 798.3,216.0 798.8,216.0 799.3,215.9 799.8,215.9 800.3,215.9 800.8,215.8 801.3,215.8 801.8,215.8 802.3,215.8 802.8,215.7 803.3,215.7 803.8,215.7 804.3,215.7 804.8,215.6 805.3,215.6 805.8,215.6 806.3,215.5 806.8,215.5 807.3,215.5 807.8,215.5 808.3,215.4 808.8,215.4 809.3,215.4 809.8,215.4 810.3,215.3 810.8,215.3 811.3,215.3 811.8,215.3 812.3,215.2 812.8,215.2 813.3,215.2 813.8,215.2 814.3,215.2 814.8,215.1 815.3,215.1 815.8,215.1 816.3,215.1 816.8,215.0 817.3,215.0 817.8,215.0 818.3,215.0 818.8,215.0 819.3,214.9 819.8,214.9 820.3,214.9 820.8,214.9 821.3,214.8 821.8,214.8 822.3,214.8 822.8,214.8 823.3,214.8 823.8,214.7 824.3,214.7 824.8,214.7 825.3,214.7 825.8,214.6 826.3,214.6 826.8,214.6 827.3,214.6 827.8,214.6 828.3,214.5 828.8,214.5 829.3,214.5 829.8,214.5 830.3,214.4 830.8,214.4 831.3,214.4 831.8,214.4 832.3,214.4 832.8,214.3 833.3,214.3 833.8,214.3 834.3,214.3 834.8,214.2 835.3,214.2 835.8,214.2 836.3,214.2 836.8,214.1 837.3,214.1 837.8,214.1 838.3,214.1 838.8,214.1 839.3,214.0 839.8,214.0 840.3,214.0 840.8,214.0 841.3,213.9 841.8,213.9 842.3,213.9 842.8,213.9 843.3,213.9 843.8,213.8 844.3,213.8 844.8,213.8 845.3,213.8 845.8,213.7 846.3,213.7 846.8,213.7 847.3,213.7 847.8,213.6 848.3,213.6 848.8,213.6 849.3,213.6 849.8,213.6 850.3,213.5 850.8,213.5 851.3,213.5 851.8,213.5 852.3,213.4 852.8,213.4 853.3,213.4 853.8,213.4 854.3,213.4 854.8,213.3 855.3,213.3 855.8,213.3 856.3,213.3 856.8,213.2 857.3,213.2 857.8,213.2 858.3,213.2 858.8,213.2 859.3,213.1 859.8,213.1 860.3,213.1 860.8,213.1 861.3,213.0 861.8,213.0 862.3,213.0 862.8,213.0 863.3,213.0 863.8,212.9 864.3,212.9 864.8,212.9 865.3,212.9 865.8,212.9 866.3,212.8 866.8,212.8 867.3,212.8 867.8,212.8 868.3,212.7 868.8,212.7 869.3,212.7" stroke="#00ffff" fill="none"/>
<path d="M517.5 212.5L513.5 225.5H521.5Z" stroke="#00ffff" fill="none"/>
<text transform="translate(513.0,235.5) scale(1.1357,1)" fill="#00ffff">1</text>
<path d="M517.5 354.5L510.5 361.5H524.5Z" stroke="#00ffff" fill="none"/>
<path d="M524.5 212.5L520.5 225.5H528.5Z" stroke="#00ffff" fill="none"/>
<text transform="translate(520.0,235.5) scale(1.1357,1)" fill="#00ffff">2</text>
<path d="M524.5 354.5L517.5 361.5H531.5Z" stroke="#00ffff" fill="none"/>
<path d="M533.5 212.5L529.5 225.5H537.5Z" stroke="#00ffff" fill="none"/>
<text transform="translate(529.0,235.5) scale(1.1357,1)" fill="#00ffff">3</text>
<path d="M533.5 354.5L526.5 361.5H540.5Z" stroke="#00ffff" fill="none"/>
<path d="M560.5 214.5L556.5 227.5H564.5Z" stroke="#00ffff" fill="none"/>
<text transform="translate(556.0,237.5) scale(1.1357,1)" fill="#00ffff">4</text>
<path d="M560.5 354.5L553.5 361.5H567.5Z" stroke="#00ffff" fill="none"/>
<path d="M604.5 222.5L600.5 235.5H608.5Z" stroke="#00ffff" fill="none"/>
<text transform="translate(600.0,245.5) scale(1.1357,1)" fill="#00ffff">5</text>
<path d="M604.5 354.5L597.5 361.5H611.5Z" stroke="#00ffff" fill="none"/>
<path d="M692.5 245.5L688.5 258.5H696.5Z" stroke="#00ffff" fill="none"/>
<text transform="translate(688.0,268.5) scale(1.1357,1)" fill="#00ffff">6</text>
<path d="M692.5 354.5L685.5 361.5H699.5Z" stroke="#00ffff" fill="none"/>
<path d="M869.5 212.5L865.5 225.5H873.5Z" stroke="#00ffff" fill="none"/>
<text transform="translate(865.0,235.5) scale(1.1357,1)" fill="#00ffff">7</text>
<path d="M869.5 354.5L862.5 361.5H876.5Z" stroke="#00ffff" fill="none"/>
<path d="M668.5 308.5L664.5 295.5H672.5Z" stroke="#00ffff" fill="none"/>
<text transform="translate(664.0,292.5) scale(1.1357,1)" fill="#00ffff">8</text>
<path d="M668.5 354.5L661.5 361.5H675.5Z" stroke="#00ffff" fill="#00ffff"/>
<text transform="translate(870,216) scale(1.1357,1)" fill="#00ffff">1</text>
<path d="M869.5 212.5L878 204.5V220.5Z" fill="#00ffff"/>
<path d="M552.5 390V673M517 418.5H870M587.5 390V673M517 446.5H870M622.5 390V673M517 474.5H870M657.5 390V673M517 502.5H870M693.5 390V673M517 531.5H870M728.5 390V673M517 559.5H870M763.5 390V673M517 587.5H870M798.5 390V673M517 615.5H870M833.5 390V673M517 643.5H870" stroke="#3c3c3c" fill="none"/>
<rect x="517.5" y="390.5" width="352" height="282" stroke="#a0a0a0" fill="none"/>
<text transform="translate(466,394) scale(1.1357,1)" fill="#b4b4b4">1.000</text>
<text transform="translate(458,422) scale(1.1357,1)" fill="#b4b4b4">900.0m</text>
<text transform="translate(458,450) scale(1.1357,1)" fill="#b4b4b4">800.0m</text>
<text transform="translate(458,478) scale(1.1357,1)" fill="#b4b4b4">700.0m</text>
<text transform="translate(458,506) scale(1.1357,1)" fill="#b4b4b4">600.0m</text>
<text transform="translate(458,535) scale(1.1357,1)" fill="#b4b4b4">500.0m</text>
<text transform="translate(458,563) scale(1.1357,1)" fill="#b4b4b4">400.0m</text>
<text transform="translate(458,591) scale(1.1357,1)" fill="#b4b4b4">300.0m</text>
<text transform="translate(458,619) scale(1.1357,1)" fill="#b4b4b4">200.0m</text>
<text transform="translate(458,647) scale(1.1357,1)" fill="#b4b4b4">100.0m</text>
<text transform="translate(466,676) scale(1.1357,1)" fill="#00ff00">0.000</text>
<path d="M517.5 672.5L509 664.5V680.5Z" fill="#00ff00"/>
<path d="M869.5 672.5L878 664.5V680.5Z" fill="#00ff00"/>
<text transform="translate(453,376) scale(1.1357,1)" fill="#00ff00">Tr4 Ls Lin Mag 100.0mU/ Ref 0.000U [F2 Equ]</text>
<text transform="translate(520,402) scale(1.1357,1)" fill="#00ff00"> 1  100.00000 MHz  2.8872 nU</text>
<text transform="translate(520,415) scale(1.1357,1)" fill="#00ff00"> 2  500.00000 MHz  2.8251 nU</text>
<text transform="translate(520,428) scale(1.1357,1)" fill="#00ff00"> 3  1.0000000 GHz  2.8574 nU</text>
<text transform="translate(520,441) scale(1.1357,1)" fill="#00ff00"> 4  2.5000000 GHz  2.9896 nU</text>
<text transform="translate(520,454) scale(1.1357,1)" fill="#00ff00"> 5  5.0000000 GHz  3.8947 nU</text>
<text transform="translate(520,467) scale(1.1357,1)" fill="#00ff00"> 6  10.000000 GHz  5.1558 nU</text>
<text transform="translate(520,480) scale(1.1357,1)" fill="#00ff00"> 7  20.000000 GHz  376.91 pU</text>
<text transform="translate(520,493) scale(1.1357,1)" fill="#00ff00">&gt;8  8.6095159 GHz  1.8754 nU</text>
<path d="M517 672.5H870" stroke="#00ff00"/>
<path d="M517.5 672.5L513.5 685.5H521.5Z" stroke="#00ff00" fill="none"/>
<text transform="translate(513.0,695.5) scale(1.1357,1)" fill="#00ff00">1</text>
<path d="M517.5 673.5L510.5 680.5H524.5Z" stroke="#00ff00" fill="none"/>
<path d="M524.5 672.5L520.5 685.5H528.5Z" stroke="#00ff00" fill="none"/>
<text transform="translate(520.0,695.5) scale(1.1357,1)" fill="#00ff00">2</text>
<path d="M524.5 673.5L517.5 680.5H531.5Z" stroke="#00ff00" fill="none"/>
<path d="M533.5 672.5L529.5 685.5H537.5Z" stroke="#00ff00" fill="none"/>
<text transform="translate(529.0,695.5) scale(1.1357,1)" fill="#00ff00">3</text>
<path d="M533.5 673.5L526.5 680.5H540.5Z" stroke="#00ff00" fill="none"/>
<path d="M560.5 672.5L556.5 685.5H564.5Z" stroke="#00ff00" fill="none"/>
<text transform="translate(556.0,695.5) scale(1.1357,1)" fill="#00ff00">4</text>
<path d="M560.5 673.5L553.5 680.5H567.5Z" stroke="#00ff00" fill="none"/>
<path d="M604.5 672.5L600.5 685.5H608.5Z" stroke="#00ff00" fill="none"/>
<text transform="translate(600.0,695.5) scale(1.1357,1)" fill="#00ff00">5</text>
<path d="M604.5 673.5L597.5 680.5H611.5Z" stroke="#00ff00" fill="none"/>
<path d="M692.5 672.5L688.5 685.5H696.5Z" stroke="#00ff00" fill="none"/>
<text transform="translate(688.0,695.5) scale(1.1357,1)" fill="#00ff00">6</text>
<path d="M692.5 673.5L685.5 680.5H699.5Z" stroke="#00ff00" fill="none"/>
<path d="M869.5 672.5L865.5 685.5H873.5Z" stroke="#00ff00" fill="none"/>
<text transform="translate(865.0,695.5) scale(1.1357,1)" fill="#00ff00">7</text>
<path d="M869.5 673.5L862.5 680.5H876.5Z" stroke="#00ff00" fill="none"/>
<path d="M668.5 672.5L664.5 659.5H672.5Z" stroke="#00ff00" fill="none"/>
<text transform="translate(664.0,656.5) scale(1.1357,1)" fill="#00ff00">8</text>
<path d="M668.5 673.5L661.5 680.5H675.5Z" stroke="#00ff00" fill="#00ff00"/>
<text transform="translate(15,376) scale(1.1357,1)" fill="#ff00ff">Tr3 S33 Smith (R+jX) Scale 1.000U [F2]</text>
<path d="M127.8 531.5a117.8 117.8 0 1 0 235.5 0a117.8 117.8 0 1 0 -235.5 0M174.9 531.5a94.2 94.2 0 1 0 188.4 0a94.2 94.2 0 1 0 -188.4 0M222.0 531.5a70.7 70.7 0 1 0 141.3 0a70.7 70.7 0 1 0 -141.3 0M269.1 531.5a47.1 47.1 0 1 0 94.2 0a47.1 47.1 0 1 0 -94.2 0M316.2 531.5a23.6 23.6 0 1 0 47.1 0a23.6 23.6 0 1 0 -47.1 0M344.4 460.9A37.9 37.9 0 0 0 363.3 531.5M344.4 602.1A37.9 37.9 0 0 1 363.3 531.5M292.7 409.1A81.6 81.6 0 0 0 363.3 531.5M292.7 653.9A81.6 81.6 0 0 1 363.3 531.5M222.0 390.2A141.3 141.3 0 0 0 363.3 531.5M222.0 672.8A141.3 141.3 0 0 1 363.3 531.5M151.4 409.1A244.7 244.7 0 0 0 363.3 531.5M151.4 653.9A244.7 244.7 0 0 1 363.3 531.5M99.6 460.9A527.3 527.3 0 0 0 363.3 531.5M99.6 602.1A527.3 527.3 0 0 1 363.3 531.5" stroke="#3c3c3c" fill="none"/>
<circle cx="222.0" cy="531.5" r="141.3" stroke="#a0a0a0" fill="none"/>
<path d="M80.7 531.5H363.3" stroke="#a0a0a0"/>
<text transform="translate(19,402) scale(1.1357,1)" fill="#ff00ff"> 1  100.00000 MHz  50.135 Ω  1.5507 Ω  2.4680 nH</text>
<text transform="translate(19,415) scale(1.1357,1)" fill="#ff00ff"> 2  500.00000 MHz  50.319 Ω  7.6814 Ω  2.4451 nH</text>
<text transform="translate(19,428) scale(1.1357,1)" fill="#ff00ff"> 3  1.0000000 GHz  50.699 Ω  15.651 Ω  2.4910 nH</text>
<text transform="translate(19,441) scale(1.1357,1)" fill="#ff00ff"> 4  2.5000000 GHz  52.638 Ω  42.492 Ω  2.7051 nH</text>
<text transform="translate(19,454) scale(1.1357,1)" fill="#ff00ff"> 5  5.0000000 GHz  66.361 Ω  125.76 Ω  4.0032 nH</text>
<text transform="translate(19,467) scale(1.1357,1)" fill="#ff00ff"> 6  10.000000 GHz  16.934 Ω -189.82 Ω  83.845 fF</text>
<text transform="translate(19,480) scale(1.1357,1)" fill="#ff00ff"> 7  20.000000 GHz  60.005 Ω  3.1093 Ω  24.743 pH</text>
<text transform="translate(19,493) scale(1.1357,1)" fill="#ff00ff">&gt;8  8.6095159 GHz  15.552 Ω -409.06 Ω  45.191 fF</text>
<polyline points="222.2,530.4 222.2,530.2 222.2,529.8 222.2,529.4 222.2,529.0 222.2,528.6 222.2,528.2 222.3,527.8 222.3,527.5 222.3,527.1 222.3,526.7 222.4,526.4 222.4,526.0 222.4,525.6 222.5,525.3 222.5,524.9 222.5,524.5 222.6,524.2 222.6,523.8 222.7,523.4 222.7,523.1 222.8,522.7 222.8,522.3 222.9,522.0 223.0,521.6 223.0,521.2 223.1,520.9 223.2,520.5 223.2,520.2 223.3,519.8 223.4,519.4 223.4,519.1 223.5,518.7 223.6,518.3 223.7,518.0 223.8,517.6 223.8,517.3 223.9,516.9 224.0,516.6 224.1,516.2 224.2,515.8 224.3,515.5 224.4,515.1 224.5,514.8 224.6,514.4 224.7,514.1 224.8,513.7 224.9,513.3 225.1,513.0 225.2,512.6 225.3,512.3 225.4,511.9 225.5,511.6 225.7,511.2 225.8,510.9 225.9,510.5 226.0,510.2 226.2,509.8 226.3,509.5 226.4,509.1 226.6,508.8 226.7,508.5 226.9,508.1 227.0,507.8 227.2,507.4 227.3,507.1 227.5,506.7 227.6,506.4 227.8,506.1 227.9,505.7 228.1,505.4 228.2,505.1 228.4,504.7 228.6,504.4 228.7,504.0 228.9,503.7 229.1,503.4 229.3,503.0 229.4,502.7 229.6,502.4 229.8,502.1 230.0,501.7 230.2,501.4 230.3,501.1 230.5,500.8 230.7,500.4 230.9,500.1 231.1,499.8 231.3,499.5 231.5,499.1 231.7,498.8 231.9,498.5 232.1,498.2 232.3,497.9 232.5,497.6 232.7,497.2 232.9,496.9 233.2,496.6 233.4,496.3 233.6,496.0 233.8,495.7 234.0,495.4 234.3,495.1 234.5,494.8 234.7,494.5 234.9,494.2 235.2,493.9 235.4,493.6 235.6,493.3 235.9,493.0 236.1,492.7 236.4,492.4 236.6,492.1 236.8,491.8 237.1,491.5 237.3,491.2 237.6,490.9 237.8,490.6 238.1,490.3 238.4,490.1 238.6,489.8 238.9,489.5 239.1,489.2 239.4,488.9 239.7,488.7 239.9,488.4 240.2,488.1 240.5,487.8 240.7,487.6 241.0,487.3 241.3,487.0 241.6,486.8 241.8,486.5 242.1,486.2 242.4,486.0 242.7,485.7 243.0,485.4 243.3,485.2 243.5,484.9 243.8,484.7 244.1,484.4 244.4,484.1 244.8,483.9 245.1,483.6 245.4,483.3 245.6,483.2 245.6,483.1 245.5,483.2 245.3,483.2 245.4,483.2 245.8,482.8 246.6,482.2 247.7,481.2 249.1,480.1 250.5,479.0 252.0,478.0 253.5,477.1 255.0,476.2 256.6,475.2 258.2,474.4 260.0,473.5 261.9,472.6 263.9,471.8 265.9,470.9 268.0,470.2 270.0,469.5 272.0,468.9 274.0,468.5 276.1,468.1 278.1,467.8 280.0,467.5 281.9,467.3 283.7,467.2 285.6,467.2 287.3,467.2 289.0,467.3 290.5,467.4 291.9,467.5 293.3,467.7 294.8,467.9 296.5,468.2 298.4,468.6 300.4,468.9 302.6,469.4 304.9,470.1 307.3,471.0 309.9,472.2 312.6,473.7 315.5,475.4 318.4,477.2 321.2,479.1 324.0,481.0 326.8,483.1 329.6,485.2 332.3,487.4 334.9,489.5 337.3,491.6 339.7,493.8 341.9,496.0 344.0,498.2 345.9,500.4 347.6,502.6 349.1,504.8 350.5,507.0 351.7,509.2 352.8,511.4 353.8,513.6 354.6,515.9 355.4,518.2 356.0,520.3 356.6,522.4 357.1,524.3 357.5,526.0 357.8,527.7 358.0,529.4 358.3,531.3 358.6,533.4 358.8,535.6 359.1,538.0 359.3,540.3 359.4,542.7 359.5,545.1 359.5,547.7 359.4,550.2 359.3,552.7 359.2,555.0 359.0,557.2 358.8,559.4 358.5,561.5 358.2,563.4 357.9,565.2 357.6,566.6 357.3,567.8 357.0,568.8 356.6,569.9 356.1,571.4 355.4,573.3 354.6,575.4 353.6,577.7 352.6,579.9 351.6,582.0 350.5,583.9 349.3,585.8 348.0,587.6 346.8,589.4 345.6,591.0 344.5,592.5 343.5,593.8 342.5,595.1 341.4,596.4 340.0,597.7 338.4,599.1 336.5,600.5 334.5,601.9 332.4,603.3 330.4,604.6 328.4,605.9 326.3,607.1 324.3,608.3 322.1,609.4 319.9,610.4 317.6,611.3 315.1,612.2 312.6,613.0 310.1,613.7 307.8,614.4 305.6,615.0 303.5,615.5 301.5,616.0 299.4,616.4 297.2,616.7 294.9,617.0 292.6,617.3 290.2,617.4 287.7,617.5 285.1,617.5 282.1,617.3 278.8,616.9 275.4,616.5 272.4,616.1 270.0,615.7 268.6,615.5 268.0,615.3 267.6,615.1 267.0,614.9 265.6,614.4 263.2,613.7 260.3,612.9 257.0,612.0 253.6,610.9 250.4,609.9 247.3,608.8 244.1,607.6 241.0,606.4 238.0,605.2 235.3,603.9 232.9,602.6 230.6,601.3 228.6,599.9 226.6,598.5 224.8,597.1 223.0,595.6 221.4,594.1 219.9,592.6 218.5,591.0 217.2,589.5 216.1,588.0 215.1,586.6 214.2,585.1 213.4,583.6 212.7,582.0 212.0,580.3 211.5,578.5 211.0,576.6 210.6,574.7 210.4,572.9 210.3,571.1 210.4,569.3 210.6,567.4 210.8,565.6 211.2,563.8 211.6,562.0 212.2,560.1 212.8,558.3 213.5,556.5 214.2,554.8 215.0,553.2 215.8,551.7 216.7,550.2 217.7,548.7 218.7,547.2 219.8,545.7 221.0,544.1 222.3,542.5 223.6,541.0 224.8,539.6 226.0,538.3 227.3,537.1 228.5,535.9 229.7,534.8 230.8,533.6 231.8,532.3 232.8,531.0 233.7,529.8 234.5,528.7 235.0,527.9" stroke="#ff00ff" fill="none"/>
<path d="M222.5 529.5L218.5 542.5H226.5Z" stroke="#ff00ff" fill="none"/>
<text transform="translate(218.0,552.5) scale(1.1357,1)" fill="#ff00ff">1</text>
<path d="M16.5 673.5L9.5 680.5H23.5Z" stroke="#ff00ff" fill="none"/>
<path d="M223.5 520.5L219.5 533.5H227.5Z" stroke="#ff00ff" fill="none"/>
<text transform="translate(219.0,543.5) scale(1.1357,1)" fill="#ff00ff">2</text>
<path d="M24.5 673.5L17.5 680.5H31.5Z" stroke="#ff00ff" fill="none"/>
<path d="M226.5 510.5L222.5 523.5H230.5Z" stroke="#ff00ff" fill="none"/>
<text transform="translate(222.0,533.5) scale(1.1357,1)" fill="#ff00ff">3</text>
<path d="M34.5 673.5L27.5 680.5H41.5Z" stroke="#ff00ff" fill="none"/>
<path d="M245.5 482.5L241.5 495.5H249.5Z" stroke="#ff00ff" fill="none"/>
<text transform="translate(241.0,505.5) scale(1.1357,1)" fill="#ff00ff">4</text>
<path d="M66.5 673.5L59.5 680.5H73.5Z" stroke="#ff00ff" fill="none"/>
<path d="M307.5 470.5L303.5 483.5H311.5Z" stroke="#ff00ff" fill="none"/>
<text transform="translate(303.0,493.5) scale(1.1357,1)" fill="#ff00ff">5</text>
<path d="M118.5 673.5L111.5 680.5H125.5Z" stroke="#ff00ff" fill="none"/>
<path d="M339.5 597.5L335.5 610.5H343.5Z" stroke="#ff00ff" fill="none"/>
<text transform="translate(335.0,620.5) scale(1.1357,1)" fill="#ff00ff">6</text>
<path d="M222.5 673.5L215.5 680.5H229.5Z" stroke="#ff00ff" fill="none"/>
<path d="M234.5 527.5L230.5 540.5H238.5Z" stroke="#ff00ff" fill="none"/>
<text transform="translate(230.0,550.5) scale(1.1357,1)" fill="#ff00ff">7</text>
<path d="M431.5 673.5L424.5 680.5H438.5Z" stroke="#ff00ff" fill="none"/>
<path d="M357.5 565.5L353.5 552.5H361.5Z" stroke="#ff00ff" fill="none"/>
<text transform="translate(353.0,549.5) scale(1.1357,1)" fill="#ff00ff">8</text>
<path d="M193.5 673.5L186.5 680.5H200.5Z" stroke="#ff00ff" fill="#ff00ff"/>
</g></svg>
</body></html>
